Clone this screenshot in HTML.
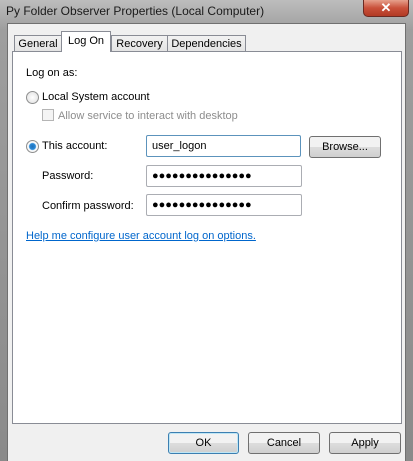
<!DOCTYPE html>
<html><head><style>
*{box-sizing:border-box;margin:0;padding:0}
body{width:413px;height:461px;overflow:hidden;background:linear-gradient(#bdbdbd,#9e9e9e 30px,#8a8a8a);font-family:"Liberation Sans",sans-serif;font-size:11px;color:#000;position:relative}
.abs{position:absolute;white-space:nowrap}
.title{left:6px;top:4px;font-size:12px;color:#1a1a1a}
.close{left:363px;top:-1px;width:46px;height:18px;border:1px solid #6b2a22;border-radius:0 0 5px 5px;background:linear-gradient(#e6a08c,#c9503a 50%,#b23a24);color:#fff;font-weight:bold;text-align:center;font-size:13px;line-height:15px}
.client{left:7px;top:23px;width:399px;height:438px;background:#f0f0f0;border:1px solid #707070;border-bottom:none}
.panel{left:12px;top:51px;width:390px;height:373px;background:#fff;border:1px solid #898c95}
.tab{top:35px;height:17px;border:1px solid #898c95;border-bottom:none;background:linear-gradient(#f2f2f2,#e3e3e3);font-size:11px;padding:2px 0 0;text-align:center;color:#000}
.tab.sel{top:31px;height:21px;background:#fff;padding-top:3px;z-index:2}
.input{height:22px;border:1px solid #abadb3;border-radius:2px;background:#fff;padding:4px 5px;font-size:11px}
.dots{font-size:11px;padding-top:4px}
.btn{height:22px;border:1px solid #707070;border-radius:3px;background:linear-gradient(#f2f2f2 50%,#dddddd 51%,#cfcfcf);text-align:center;line-height:20px;font-size:11px}
.radio{width:13px;height:13px;border-radius:50%;border:1px solid #8e8f8f;background:radial-gradient(#fff,#ddd)}
</style></head><body>
<div class="abs title">Py Folder Observer Properties (Local Computer)</div>
<div class="abs close">✕</div>
<div class="abs client"></div>
<div class="abs tab" style="left:14px;width:48px">General</div>
<div class="abs tab sel" style="left:61px;width:50px">Log On</div>
<div class="abs tab" style="left:111px;width:57px">Recovery</div>
<div class="abs tab" style="left:167px;width:79px">Dependencies</div>
<div class="abs panel"></div>
<div class="abs" style="left:26px;top:67px">Log on as:</div>
<div class="abs radio" style="left:26px;top:91px"></div>
<div class="abs" style="left:42px;top:91px">Local System account</div>
<div class="abs" style="left:42px;top:109px;width:12px;height:12px;border:1px solid #b5b5b5;background:#f4f4f4"></div>
<div class="abs" style="left:58px;top:110px;color:#8d8d8d">Allow service to interact with desktop</div>
<div class="abs radio" style="left:26px;top:140px;background:radial-gradient(#1f6fb8 0,#2a8ad8 3px,#fff 4px,#ddd)"></div>
<div class="abs" style="left:42px;top:140px">This account:</div>
<div class="abs input" style="left:146px;top:135px;width:155px;border-color:#5c93bc">user_logon</div>
<div class="abs btn" style="left:309px;top:136px;width:72px">Browse...</div>
<div class="abs" style="left:42px;top:170px">Password:</div>
<div class="abs input dots" style="left:146px;top:165px;width:156px">●●●●●●●●●●●●●●●</div>
<div class="abs" style="left:42px;top:200px">Confirm password:</div>
<div class="abs input dots" style="left:146px;top:194px;width:156px">●●●●●●●●●●●●●●●</div>
<div class="abs" style="left:26px;top:230px;color:#0066cc;text-decoration:underline">Help me configure user account log on options.</div>
<div class="abs btn" style="left:168px;top:432px;width:71px;border-color:#3c7fb1;box-shadow:inset 0 0 0 1px #bfe6f5">OK</div>
<div class="abs btn" style="left:248px;top:432px;width:72px">Cancel</div>
<div class="abs btn" style="left:329px;top:432px;width:72px">Apply</div>
</body></html>
